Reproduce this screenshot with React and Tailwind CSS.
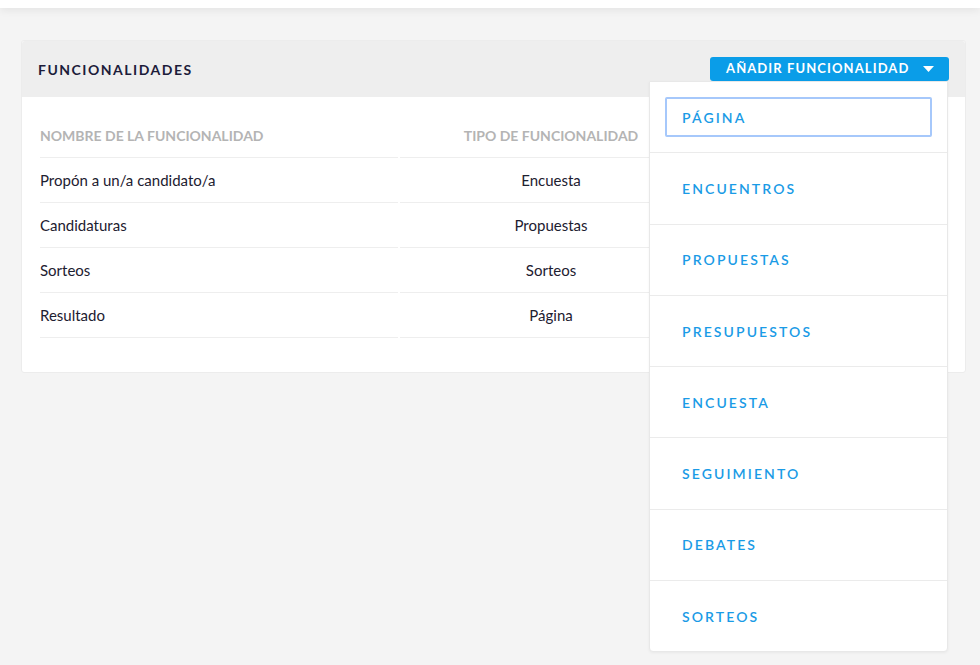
import React from "react";

const rows = [
  ["Propón a un/a candidato/a", "Encuesta"],
  ["Candidaturas", "Propuestas"],
  ["Sorteos", "Sorteos"],
  ["Resultado", "Página"],
];

const items = ["PÁGINA", "ENCUENTROS", "PROPUESTAS", "PRESUPUESTOS", "ENCUESTA", "SEGUIMIENTO", "DEBATES", "SORTEOS"];

export default function App() {
  return (
    <div className="w-[980px] h-[665px] bg-[#f4f4f4] overflow-hidden relative" style={{ fontFamily: "Lato, 'Noto Sans', sans-serif" }}>
      <div className="h-2 bg-white shadow-[0_2px_8px_rgba(0,0,0,0.08)]" />
      <div className="pl-[21px] pr-[14px] pt-[32px]">
        <div className="bg-white rounded-[3px] border border-[#ececec] relative">
          <div className="h-[56px] bg-[#eeeeee] flex items-center justify-between pl-[16px] pr-[16px] rounded-t-[3px]">
            <h2 className="text-[14px] font-bold tracking-[1.5px] text-[#1c1c3a]">FUNCIONALIDADES</h2>
            <div className="relative">
              <button className="h-[24px] w-[239px] bg-[#0a9de8] rounded-[3px] text-white text-[13px] font-bold tracking-[1.1px] flex items-center pl-[16px] gap-[14px]">
                <span>AÑADIR FUNCIONALIDAD</span>
                <svg width="11" height="6" viewBox="0 0 11 6"><path d="M0 0H11L5.5 6Z" fill="white" /></svg>
              </button>
            </div>
          </div>
          <div className="pt-[16px] pb-[34px] px-[18px]">
            <div className="grid grid-cols-[358px_302px_1fr] gap-x-[2px]">
              <div className="h-[45px] flex items-center border-b border-[#eeeeee] text-[14px] font-bold text-[#b4b4b4]">NOMBRE DE LA FUNCIONALIDAD</div>
              <div className="h-[45px] flex items-center justify-center border-b border-[#eeeeee] text-[14px] font-bold text-[#b4b4b4]">TIPO DE FUNCIONALIDAD</div>
              <div className="h-[45px] border-b border-[#eeeeee]" />
              {rows.map(([a, b]) => (
                <React.Fragment key={a}>
                  <div className="h-[45px] flex items-center border-b border-[#eeeeee] text-[15px] text-[#1d2030]">{a}</div>
                  <div className="h-[45px] flex items-center justify-center border-b border-[#eeeeee] text-[15px] text-[#1d2030]">{b}</div>
                  <div className="h-[45px] border-b border-[#eeeeee]" />
                </React.Fragment>
              ))}
            </div>
          </div>
          <ul className="absolute left-[627px] top-[40px] w-[299px] bg-white border border-[#e8e8e8] rounded-b-[4px] shadow-[0_1px_3px_rgba(0,0,0,0.05)]">
            {items.map((t, i) => (
              <li key={t} className={`p-[15px] ${i < items.length - 1 ? "border-b border-[#ebebeb]" : ""}`}>
                <a className={i === 0 ? "h-[40.3px] flex items-center pl-[15px] border-2 border-[#a6c8fb] rounded-[2px] text-[14px] font-semibold tracking-[2.1px] text-[#1a9be6]" : "h-[40.3px] flex items-center pl-[17px] text-[14px] font-semibold tracking-[2.1px] text-[#1a9be6]"}>{t}</a>
              </li>
            ))}
          </ul>
        </div>
      </div>
    </div>
  );
}
